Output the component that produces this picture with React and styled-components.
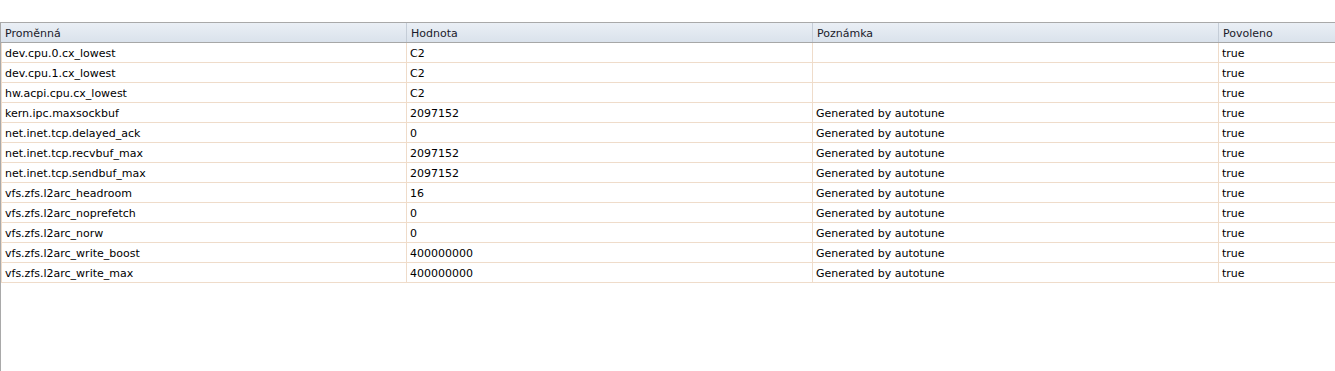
import React from 'react';
import styled, { createGlobalStyle } from 'styled-components';

const GlobalStyle = createGlobalStyle`
  html, body {
    margin: 0;
    padding: 0;
    background: #fff;
  }
  body {
    font-family: "DejaVu Sans", Tahoma, sans-serif;
    font-size: 11px;
    color: #000;
  }
`;

const Page = styled.div`
  padding-top: 22px;
  height: 349px;
`;

const Grid = styled.div`
  height: 100%;
  border-top: 1px solid #a9a9a9;
  border-left: 1px solid #a9a9a9;
  overflow: hidden;
`;

const Header = styled.div`
  display: grid;
  grid-template-columns: 405px 406px 406px 1fr;
  height: 19px;
  background: linear-gradient(#eaeff5, #dae2ec);
  border-bottom: 1px solid #a7a7a7;
`;

const HeadCell = styled.div`
  padding: 1px 4px 0;
  line-height: 19px;
  white-space: nowrap;
  overflow: hidden;
  border-left: ${(p) => (p.$first ? 'none' : '1px solid #c5cdd7')};
  color: #1a1a2a;
`;

const Row = styled.div`
  display: grid;
  grid-template-columns: 404px 406px 406px 1fr;
  height: 19px;
  border-bottom: 1px solid #efdcca;
  border-left: 1px solid #efdcca;
`;

const Cell = styled.div`
  padding: 1px 3px 0;
  line-height: 19px;
  white-space: nowrap;
  overflow: hidden;
  border-left: ${(p) => (p.$first ? 'none' : '1px solid #efdcca')};
`;

const rows = [
  ['dev.cpu.0.cx_lowest', 'C2', '', 'true'],
  ['dev.cpu.1.cx_lowest', 'C2', '', 'true'],
  ['hw.acpi.cpu.cx_lowest', 'C2', '', 'true'],
  ['kern.ipc.maxsockbuf', '2097152', 'Generated by autotune', 'true'],
  ['net.inet.tcp.delayed_ack', '0', 'Generated by autotune', 'true'],
  ['net.inet.tcp.recvbuf_max', '2097152', 'Generated by autotune', 'true'],
  ['net.inet.tcp.sendbuf_max', '2097152', 'Generated by autotune', 'true'],
  ['vfs.zfs.l2arc_headroom', '16', 'Generated by autotune', 'true'],
  ['vfs.zfs.l2arc_noprefetch', '0', 'Generated by autotune', 'true'],
  ['vfs.zfs.l2arc_norw', '0', 'Generated by autotune', 'true'],
  ['vfs.zfs.l2arc_write_boost', '400000000', 'Generated by autotune', 'true'],
  ['vfs.zfs.l2arc_write_max', '400000000', 'Generated by autotune', 'true'],
];

const App = () => (
  <Page>
    <GlobalStyle />
    <Grid>
      <Header>
        <HeadCell $first>Proměnná</HeadCell>
        <HeadCell>Hodnota</HeadCell>
        <HeadCell>Poznámka</HeadCell>
        <HeadCell>Povoleno</HeadCell>
      </Header>
      {rows.map((r) => (
        <Row key={r[0]}>
          {r.map((c, i) => (
            <Cell key={i} $first={i === 0}>{c}</Cell>
          ))}
        </Row>
      ))}
    </Grid>
  </Page>
);

export default App;
